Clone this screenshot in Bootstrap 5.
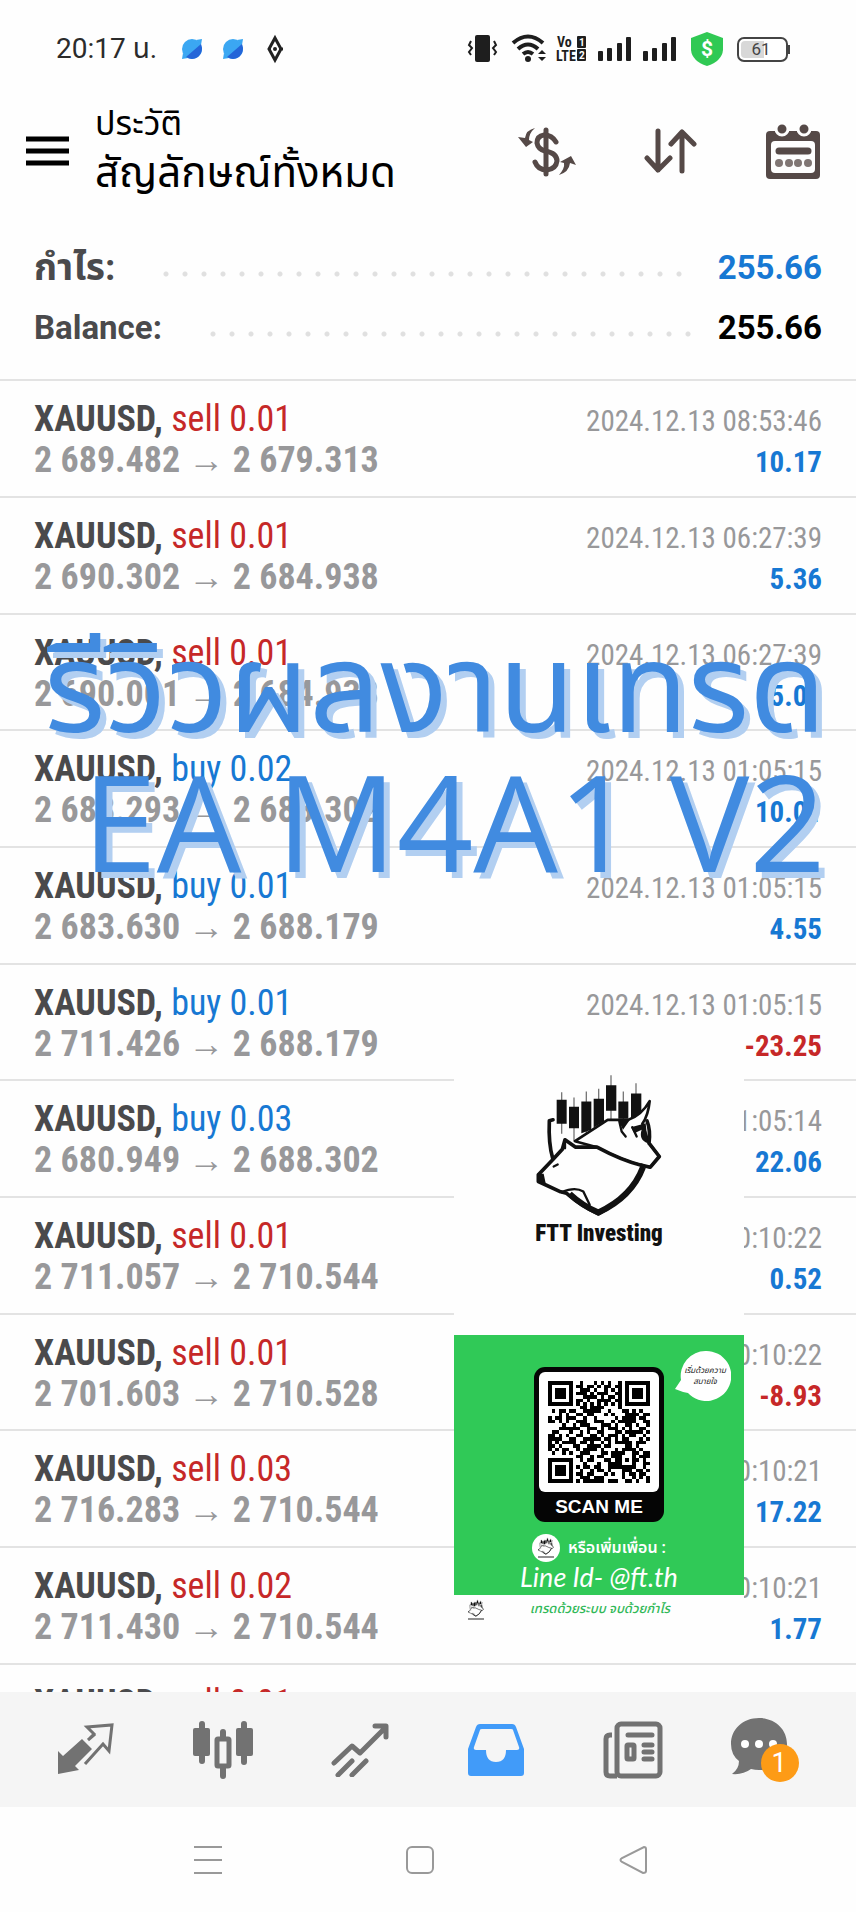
<!DOCTYPE html>
<html lang="th">
<head>
<meta charset="utf-8">
<meta name="viewport" content="width=device-width, initial-scale=1">
<title>ประวัติ</title>
<link href="https://cdn.jsdelivr.net/npm/bootstrap@5.3.0/dist/css/bootstrap.min.css" rel="stylesheet">
<style>
  body { font-family: Roboto, "Noto Sans Thai", "Noto Sans", sans-serif; background: #fefefe; color: #000; }
  svg { display: block; flex: none; }
  .bare { background: none; border: 0; padding: 0; }
  .status-bar { height: 98px; padding: 0 66px 0 56px; font-size: 28px; color: #2b2b2b; }
  .app-bar { height: 106px; padding: 0 35px 0 26px; }
  .titles { margin-left: 26px; }
  .screen-title { font-size: 34px; line-height: 44px; }
  .screen-sub { font-size: 42px; line-height: 56px; }
  .tools { gap: 68px; }
  .totals { padding: 34px 34px 21px; border-bottom: 2px solid #e3e3e3; font-size: 33px; line-height: 60px; font-weight: 700; color: #4a4a4c; }
  .label-th { font-size: 37px; }
  .dots { height: 6px; margin: 12px 25px 0 48px; background: radial-gradient(circle at 3px 3px, #e0e0e0 2px, transparent 3px) 0 0 / 19px 6px; }
  .blue { color: #1778d3; }
  .red { color: #c62828; }
  .trades { flex: 1 1 0; min-height: 0; }
  .trade { height: 117px; padding: 19px 34px 0; border-bottom: 2px solid #e3e3e3; font-family: "Roboto Condensed", "Liberation Sans Narrow", sans-serif; line-height: 39px; white-space: nowrap; }
  .trade:nth-child(3n) { height: 116px; }
  .sym { font-size: 36px; color: #4a4a4c; }
  .price { font-size: 36px; color: #98989a; font-weight: 700; }
  .when { font-size: 29px; color: #98989a; }
  .gain { font-size: 29px; font-weight: 700; }
  .banner { top: 233px; right: 30px; color: #418be0; text-shadow: 6px 6px 0 #b2cff1; text-align: right; white-space: nowrap; font-family: "Open Sans", "Noto Sans Thai", sans-serif; }
  .banner-th { font-size: 125px; line-height: 140px; }
  .banner-en { font-size: 134px; line-height: 132px; }
  .promo { top: 684px; right: 112px; width: 290px; background: #fefefe; }
  .promo-top { height: 270px; padding-top: 8px; }
  .brand { font: 900 23px/28px "Roboto Condensed", "Liberation Sans Narrow", sans-serif; color: #111; }
  .promo-green { height: 260px; background: #30c957; padding-top: 32px; color: #fff; }
  .bubble { top: 16px; right: 13px; }
  .bubble-text { top: 30px; right: 16px; width: 46px; font-size: 8px; line-height: 11px; font-style: italic; color: #222; text-align: center; white-space: nowrap; }
  .qr-frame { width: 130px; background: #050505; border-radius: 11px; padding: 5px 5px 0; }
  .qr-pad { background: #fff; border-radius: 6px; padding: 9px; }
  .scan { font: 700 19px/30px "Liberation Sans", sans-serif; }
  .add-friend { font-size: 16px; line-height: 28px; margin-top: 12px; font-weight: 600; }
  .line-id { font: italic 27px/30px Lato, sans-serif; }
  .slogan { height: 35px; padding: 4px 74px 0 13px; font-size: 13px; font-style: italic; font-weight: 500; color: #30b857; white-space: nowrap; }
  .tabs { height: 115px; padding: 0 18px; background: #f5f5f5; }
  .sys { height: 105px; padding: 0 117px 0 102px; }
</style>
</head>
<body>
<svg width="0" height="0" class="position-absolute" aria-hidden="true">
  <symbol id="logo" viewBox="280 100 384 440">
    <g stroke="#777" stroke-width="4"><path d="M360 157V282M397 173V305M434 155V280M471 147V250M508 106V240M545 155V240M583 130V230"/></g>
    <g fill="#111"><path d="M345 180h30v72h-30zM382 201h30v64h-30zM419 185h30v85l-30 10zM456 177h31v68l-31 18zM493 136h31v77h-31zM530 185h30v52h-30zM568 161h31v60l-31 14z"/></g>
    <g fill="none" stroke="#111" stroke-width="11" stroke-linejoin="round" stroke-linecap="round">
      <path d="M334 240 L323 243 Q320 310 333 355"/>
      <path fill="#fefefe" stroke-width="8" d="M400 304 L498 240 L560 240 Q600 226 624 184 Q620 226 602 252 L622 310 L653 350 L626 382 L604 378 Q540 362 466 322 Z"/>
      <path d="M616 243 Q627 270 622 310M622 310L653 350L626 382L600 376"/>
      <path fill="#fefefe" d="M290 405 L333 360 L362 328 L370 300 L402 322 L466 322 Q540 362 604 378 Q570 470 470 522 Q420 500 374 460 L357 456 L290 425 Z"/>
      <path stroke-width="18" stroke-linecap="butt" d="M604 382 Q570 472 470 518 Q420 496 384 462"/>
      <path stroke-width="7" d="M360 457 Q400 440 425 455 L444 495M533 245 L540 275 L552 290M572 262 L585 290M370 300V325M336 380l12-6"/>
    </g>
    <path fill="#111" d="M568 262 L612 250 L618 310 Q590 300 600 270 L578 280zM530 240l36-2-22 32zM286 402h20l6 28-24-6z"/>
  </symbol>
</svg>

<div class="vh-100 d-flex flex-column overflow-hidden">
  <div class="status-bar flex-shrink-0 d-flex align-items-center">
    <span>20:17 น.</span>
    <svg class="ms-4" width="104" height="34" viewBox="0 0 104 34">
      <g id="planet"><circle cx="11" cy="17" r="10" fill="#3ba7f2"/><path d="M15 8l6-1-1 6zM1 27l1-6 5 5z" fill="#3ba7f2"/><path d="M20 12Q23 20 17 25Q11 29 5 25z" fill="#2465d8"/></g>
      <use href="#planet" x="41"/>
      <path d="M94 6l6 11-6 11-6-11zM87 17l3 0M98 17l4 0" fill="none" stroke="#222" stroke-width="3"/><circle cx="94" cy="17" r="2" fill="#222"/>
    </svg>
    <svg class="ms-auto" width="323" height="36" viewBox="467 31 323 36">
      <g fill="#1e1e1e">
        <rect x="475" y="35" width="15" height="27" rx="2"/>
        <path d="M471 41l-2 4 3 3-3 4 2 3M494 41l2 4-3 3 3 4-2 3" fill="none" stroke="#1e1e1e" stroke-width="2"/>
        <g fill="none" stroke="#1e1e1e" stroke-width="4"><path d="M513 43q15-13 30 0M518 49q10-9 20 0M523 54q5-4 10 0"/></g>
        <circle cx="528" cy="59" r="3"/><path d="M538 54l4-4 4 4zM538 57h8l-4 4z"/>
        <g font-size="14" font-weight="700" font-family="Roboto Condensed, Liberation Sans Narrow, sans-serif"><text x="557" y="47">Vo</text><text x="556" y="61">LTE</text></g>
        <rect x="577" y="36" width="9" height="12" rx="1"/><rect x="577" y="49" width="9" height="12" rx="1"/>
        <g fill="#fff" font-size="10" font-weight="700"><text x="579" y="46">1</text><text x="579" y="59">2</text></g>
        <g id="bars"><rect x="598" y="51" width="5" height="10" rx="1"/><rect x="607" y="48" width="5" height="13" rx="1"/><rect x="617" y="43" width="5" height="18" rx="1"/><rect x="626" y="37" width="5" height="24" rx="1"/></g>
        <use href="#bars" x="45"/>
      </g>
      <path d="M707 32l16 6v12q-1 11-16 16q-15-5-16-16V38z" fill="#30c954"/>
      <text x="707" y="56" text-anchor="middle" font-size="21" font-weight="700" fill="#fff">$</text>
      <rect x="738" y="38" width="49" height="23" rx="6" fill="#fff" stroke="#444" stroke-width="2"/><path d="M745 41h19v17h-19q-4 0-4-4v-9q0-4 4-4z" fill="#d8d8d8"/><rect x="788" y="45" width="2" height="9" fill="#444"/>
      <text x="761" y="55" text-anchor="middle" font-size="17" fill="#444">61</text>
    </svg>
  </div>

  <header class="app-bar flex-shrink-0 d-flex align-items-center">
    <button class="bare" aria-label="เมนู"><svg width="43" height="30" viewBox="0 0 43 30"><path d="M0 3h43M0 15h43M0 27h43" stroke="#000" stroke-width="5"/></svg></button>
    <div class="titles">
      <div class="screen-title">ประวัติ</div>
      <div class="screen-sub">สัญลักษณ์ทั้งหมด</div>
    </div>
    <div class="tools ms-auto d-flex align-items-center">
      <button class="bare" aria-label="สกุลเงิน"><svg width="58" height="56" viewBox="518 122 58 56" fill="#554947">
        <path d="M546 129v44" stroke="#554947" stroke-width="5" stroke-linecap="round"/>
        <path d="M556 141q-4-7-12-7q-7 1-7 8q1 6 8 8q12 2 12 10q-1 8-10 9q-9 0-12-8" fill="none" stroke="#554947" stroke-width="5" stroke-linecap="round"/>
        <path d="M535 127q-9 2-10 10l-7-1 8 10 7-5-4-2q0-7 6-12zM559 174q10-3 11-12l6 2-5-9-11 6 4 1q1 5-5 12z"/>
      </svg></button>
      <button class="bare" aria-label="จัดเรียง"><svg width="53" height="46" viewBox="0 0 53 46" fill="none" stroke="#554947" stroke-width="5" stroke-linecap="round" stroke-linejoin="round"><path d="M14 3v39M3 30l11 12 12-12M38 43V4M27 16L38 4l12 12"/></svg></button>
      <button class="bare" aria-label="ปฏิทิน"><svg width="56" height="56" viewBox="0 0 56 56"><rect x="1" y="8" width="54" height="48" rx="4" fill="#554947"/><rect x="6" y="18" width="44" height="32" rx="4" fill="#fefefe"/><g fill="#554947" stroke="#fefefe" stroke-width="3"><circle cx="17" cy="6" r="6"/><circle cx="39" cy="6" r="6"/></g><path d="M14 28h29" stroke="#554947" stroke-width="7" stroke-linecap="round"/><g fill="#807674"><circle cx="14" cy="40" r="4"/><circle cx="24" cy="40" r="4"/><circle cx="33" cy="40" r="4"/><circle cx="43" cy="40" r="4"/></g></svg></button>
    </div>
  </header>

  <section class="totals flex-shrink-0">
    <div class="d-flex align-items-center"><span class="label-th">กำไร:</span><span class="dots flex-grow-1"></span><span class="blue">255.66</span></div>
    <div class="d-flex align-items-center"><span>Balance:</span><span class="dots flex-grow-1"></span><span class="text-black">255.66</span></div>
  </section>

  <main class="trades position-relative overflow-hidden">
    <ul class="list-unstyled m-0" id="trades"></ul>

    <div class="banner position-absolute">
      <div class="banner-th">รีวิวผลงานเทรด</div>
      <div class="banner-en">EA M4A1 V2</div>
    </div>

    <aside class="promo position-absolute">
      <div class="promo-top d-flex flex-column align-items-center">
        <svg width="128" height="147"><use href="#logo"/></svg>
        <div class="brand">FTT Investing</div>
      </div>
      <div class="promo-green position-relative d-flex flex-column align-items-center">
        <svg class="bubble position-absolute" width="56" height="50" viewBox="0 0 56 50"><path d="M31 0a25 25 0 1 1-18 42q-6-1-13-4l6-9A25 25 0 0 1 31 0z" fill="#fff"/></svg>
        <div class="bubble-text position-absolute">เริ่มด้วยความ<br>สบายใจ</div>
        <div class="qr-frame text-center">
          <div class="qr-pad"><svg id="qr" class="w-100" viewBox="0 0 29 29" shape-rendering="crispEdges" role="img" aria-label="QR"></svg></div>
          <div class="scan">SCAN ME</div>
        </div>
        <div class="add-friend d-flex align-items-center gap-2">
          <svg width="28" height="28" viewBox="0 0 28 28"><circle cx="14" cy="14" r="14" fill="#fff"/><use href="#logo" x="6" y="3" width="16" height="18"/><path d="M6 23h16" stroke="#222"/></svg>
          <span>หรือเพิ่มเพื่อน :</span>
        </div>
        <div class="line-id">Line Id- @ft.th</div>
      </div>
      <div class="slogan d-flex justify-content-between">
        <svg width="18" height="22" viewBox="0 0 18 22"><use href="#logo" x="1" y="0" width="16" height="18"/><path d="M1 20h16" stroke="#222"/></svg>
        <span>เทรดด้วยระบบ จบด้วยกำไร</span>
      </div>
    </aside>
  </main>

  <nav class="tabs flex-shrink-0 d-flex align-items-center">
    <a href="#" class="col d-flex justify-content-center" aria-label="ราคา"><svg width="60" height="54" viewBox="0 0 60 54"><path d="M2 51V28l5 5L26 16 36 26 19 43l4 4z" fill="#727272"/><path d="M32 17l6-6-7-7 25-2-3 26-6-7-18 20M32 17l7-6" fill="none" stroke="#727272" stroke-width="3"/></svg></a>
    <a href="#" class="col d-flex justify-content-center" aria-label="กราฟ"><svg width="60" height="58" viewBox="0 0 60 58" fill="#727272"><rect y="7" width="17" height="28" rx="2"/><rect x="43" y="7" width="17" height="28" rx="2"/><path d="M9 3v37M51 3v38M30 11v8M30 45v10" stroke="#727272" stroke-width="6" stroke-linecap="round"/><rect x="24" y="18" width="12" height="27" rx="1" fill="#f5f5f5" stroke="#727272" stroke-width="5"/></svg></a>
    <a href="#" class="col d-flex justify-content-center" aria-label="เทรด"><svg width="58" height="54" viewBox="0 0 58 54" fill="none" stroke="#727272" stroke-width="5" stroke-linecap="round" stroke-linejoin="round"><path d="M3 40L21 23l8 7L54 5M44 3h11v11M7 52l14-14M21 52l14-14"/></svg></a>
    <a href="#" class="col d-flex justify-content-center" aria-label="ประวัติ"><svg width="58" height="54" viewBox="0 0 58 54"><path fill="#419bf9" fill-rule="evenodd" d="M13 1h32q3 0 4 3l8 22v24q0 3-3 3H4q-3 0-3-3V26L9 4q1-3 4-3zM15 6q-2 0-2 1L7 24q-1 3 2 3h10q0 12 10 12t10-12h11q3 0 2-3L46 7q0-1-2-1z"/></svg></a>
    <a href="#" class="col d-flex justify-content-center" aria-label="ข่าว"><svg width="60" height="58" viewBox="0 0 60 58" fill="none" stroke="#727272" stroke-width="5"><rect x="14" y="3" width="43" height="52" rx="4"/><path d="M14 55H7q-4 0-4-4V18q0-4 4-4h2"/><path d="M25 14h24M41 24h8M41 31h8M41 38h8" stroke-linecap="round"/><rect x="24" y="24" width="7" height="14" rx="1"/></svg></a>
    <a href="#" class="col d-flex justify-content-center" aria-label="ข้อความ"><svg width="78" height="66" viewBox="0 0 78 66"><path d="M28 1c16 0 28 11 28 26S44 53 28 53q-4 0-8-1Q12 58 1 57q7-5 7-13Q0 38 0 27C0 12 12 1 28 1z" fill="#727272"/><g fill="#fff"><circle cx="14" cy="27" r="4"/><circle cx="28" cy="27" r="4"/><circle cx="42" cy="27" r="4"/></g><circle cx="49" cy="46" r="19" fill="#fd9b16"/><text x="48" y="55" text-anchor="middle" font-size="27" fill="#fff">1</text></svg></a>
  </nav>

  <div class="sys flex-shrink-0 d-flex align-items-center">
    <button class="bare col d-flex justify-content-center" aria-label="แอปล่าสุด"><svg width="30" height="30" viewBox="0 0 30 30"><path d="M1 2h28M1 15h28M1 28h28" stroke="#999" stroke-width="2"/></svg></button>
    <button class="bare col d-flex justify-content-center" aria-label="หน้าหลัก"><svg width="30" height="30" viewBox="0 0 30 30"><rect x="2" y="2" width="26" height="26" rx="5" fill="none" stroke="#999" stroke-width="2"/></svg></button>
    <button class="bare col d-flex justify-content-center" aria-label="ย้อนกลับ"><svg width="30" height="30" viewBox="0 0 30 30"><path d="M26 2q2 0 2 2v22q0 2-3 2L4 17q-3-2 0-4z" fill="none" stroke="#999" stroke-width="2"/></svg></button>
  </div>
</div>

<script src="https://cdn.jsdelivr.net/npm/bootstrap@5.3.0/dist/js/bootstrap.bundle.min.js"></script>
<script>
  // side, volume, open, close, time, profit
  const trades = [
    ['sell', '0.01', '2 689.482', '2 679.313', '08:53:46', '10.17'],
    ['sell', '0.01', '2 690.302', '2 684.938', '06:27:39', '5.36'],
    ['sell', '0.01', '2 690.001', '2 684.938', '06:27:39', '5.06'],
    ['buy', '0.02', '2 683.293', '2 688.302', '01:05:15', '10.01'],
    ['buy', '0.01', '2 683.630', '2 688.179', '01:05:15', '4.55'],
    ['buy', '0.01', '2 711.426', '2 688.179', '01:05:15', '-23.25'],
    ['buy', '0.03', '2 680.949', '2 688.302', '01:05:14', '22.06'],
    ['sell', '0.01', '2 711.057', '2 710.544', '00:10:22', '0.52'],
    ['sell', '0.01', '2 701.603', '2 710.528', '00:10:22', '-8.93'],
    ['sell', '0.03', '2 716.283', '2 710.544', '00:10:21', '17.22'],
    ['sell', '0.02', '2 711.430', '2 710.544', '00:10:21', '1.77'],
    ['sell', '0.01', '', '', '', '']
  ];
  document.getElementById('trades').innerHTML = trades.map(([side, vol, open, close, time, gain]) => `
    <li class="trade">
      <div class="d-flex justify-content-between align-items-baseline">
        <span class="sym"><b>XAUUSD,</b> <span class="${side === 'buy' ? 'blue' : 'red'}">${side} ${vol}</span></span>
        <span class="when">${time ? '2024.12.13 ' + time : ''}</span>
      </div>
      <div class="d-flex justify-content-between align-items-baseline">
        <span class="price">${open ? open + ' → ' + close : ''}</span>
        <span class="gain ${gain[0] === '-' ? 'red' : 'blue'}">${gain}</span>
      </div>
    </li>`).join('');

  const qr = [
    '11111110010001010100101111111',
    '10000010110110101101101000001',
    '10111010011101001010101011101',
    '10111010111010111001101011101',
    '10111010001111010110101011101',
    '10000010110100111101101000001',
    '11111110101010101010101111111',
    '00000000011011110000100000000',
    '01011011001111100100011010100',
    '00010100110110001010001111011',
    '10110111001001000001011110110',
    '11010100111001110010111110011',
    '00001001011100011101001101001',
    '00011111100111010111010100110',
    '01100010010100110001101111101',
    '11010100110011010111010110010',
    '11110011001111101101011000101',
    '10101111011010010101111101110',
    '11010001100111101100001101000',
    '10101100101111010001011110100',
    '01001010011100011011110011011',
    '00000000110010110011100010111',
    '11111110010110001101101011010',
    '10000010001000100111100010011',
    '10111010101101100111111110010',
    '10111010010010110100011101101',
    '10111010110110001010010110110',
    '10000010011101110000010010101',
    '11111110101111110111001101001'
  ];
  document.getElementById('qr').innerHTML = '<path d="' + qr.map((row, y) =>
    [...row].map((bit, x) => bit === '1' ? `M${x} ${y}h1v1h-1z` : '').join('')).join('') + '"/>';
</script>
</body>
</html>
